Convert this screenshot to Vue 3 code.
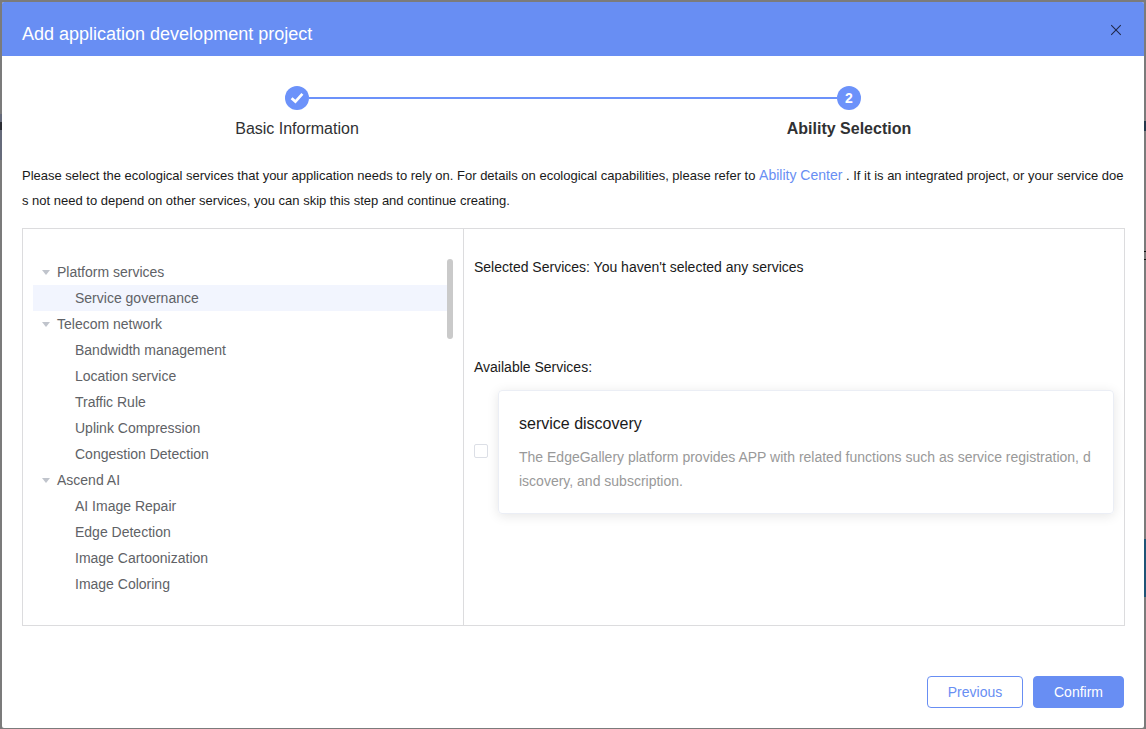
<script setup>
const tree = [
  { label: 'Platform services', children: ['Service governance'] },
  {
    label: 'Telecom network',
    children: ['Bandwidth management', 'Location service', 'Traffic Rule', 'Uplink Compression', 'Congestion Detection']
  },
  { label: 'Ascend AI', children: ['AI Image Repair', 'Edge Detection', 'Image Cartoonization', 'Image Coloring'] }
]
const selected = 'Service governance'
</script>

<template>
  <div class="backdrop">
    <i class="peek peek-left"></i>
    <i class="peek peek-right"></i>
    <i class="peek peek-mark"></i>
    <i class="peek peek-bubble"></i>
    <div class="dialog">
      <header class="head">
        <span class="title">Add application development project</span>
        <svg class="close" width="12" height="12" viewBox="0 0 12 12">
          <path d="M1.2 1.2L10.8 10.8M10.8 1.2L1.2 10.8" fill="none" stroke="#20294a" stroke-width="1.05" />
        </svg>
      </header>

      <div class="steps">
        <div class="step">
          <span class="dot">
            <svg width="14" height="12" viewBox="0 0 14 12">
              <path d="M1.6 6.2L5.4 9.6L12.4 1.8" fill="none" stroke="#fff" stroke-width="2.7" />
            </svg>
          </span>
          <span class="step-name">Basic Information</span>
        </div>
        <div class="rail"></div>
        <div class="step">
          <span class="dot">2</span>
          <span class="step-name active">Ability Selection</span>
        </div>
      </div>

      <p class="intro">Please select the ecological services that your application needs to rely on. For details on ecological capabilities, please refer to <a>Ability Center</a> . If it is an integrated project, or your service doe<br>s not need to depend on other services, you can skip this step and continue creating.</p>

      <div class="panel">
        <div class="left">
          <div class="tree">
            <template v-for="group in tree" :key="group.label">
              <div class="node"><i class="caret"></i>{{ group.label }}</div>
              <div v-for="c in group.children" :key="c" class="node leaf" :class="{ current: c === selected }">{{ c }}</div>
            </template>
          </div>
          <div class="thumb"></div>
        </div>
        <div class="right">
          <div class="caption">Selected Services: You haven't selected any services</div>
          <div class="caption available">Available Services:</div>
          <div class="service">
            <span class="checkbox"></span>
            <div class="card">
              <div class="card-title">service discovery</div>
              <div class="card-text">The EdgeGallery platform provides APP with related functions such as service registration, d<br>iscovery, and subscription.</div>
            </div>
          </div>
        </div>
      </div>

      <footer class="foot">
        <button class="btn">Previous</button>
        <button class="btn primary">Confirm</button>
      </footer>
    </div>
  </div>
</template>

<style>
body {
  margin: 0;
  overflow: hidden;
}
</style>

<style scoped>
* {
  box-sizing: border-box;
}
.backdrop {
  position: relative;
  width: 1146px;
  height: 729px;
  padding: 2px 2px 1px;
  background: #7b7b7b;
  font-family: "Liberation Sans", Arial, sans-serif;
  font-size: 14px;
}
.peek {
  position: absolute;
  width: 2px;
}
.peek-left {
  left: 0;
  top: 114px;
  height: 46px;
  background: linear-gradient(#666b7b 0 8px, #2b2d33 8px 16px, #666b7b 16px);
}
.peek-right {
  right: 0;
  top: 121px;
  height: 10px;
  background: #26384b;
}
.peek-mark {
  right: 0;
  top: 251px;
  height: 9px;
  border: solid #111;
  border-width: 1px 0;
}
.peek-bubble {
  right: 0;
  top: 539px;
  height: 58px;
  background: #1f5476;
}
.dialog {
  width: 1142px;
  height: 726px;
  background: #fff;
  border-radius: 2px;
  overflow: hidden;
  white-space: nowrap;
}
.head {
  display: flex;
  justify-content: space-between;
  height: 54px;
  padding: 19px 22px 0 20px;
  background: #688ef3;
}
.title {
  font-size: 18px;
  line-height: 26px;
  color: #fff;
}
.close {
  margin-top: 3px;
}
.steps {
  display: flex;
  justify-content: center;
  padding-top: 30px;
}
.step {
  display: flex;
  flex-direction: column;
  align-items: center;
  width: 24px;
}
.dot {
  display: flex;
  align-items: center;
  justify-content: center;
  width: 24px;
  height: 24px;
  border-radius: 50%;
  background: #6c92fa;
  color: #fff;
  font-size: 14px;
  font-weight: 700;
}
.step-name {
  margin-top: 7px;
  font-size: 16px;
  line-height: 24px;
  color: #303133;
}
.active {
  font-weight: 700;
}
.rail {
  width: 528px;
  height: 2px;
  margin-top: 11px;
  background: #6c92fa;
}
.intro {
  margin: 22px 0 0 20px;
  font-size: 13px;
  line-height: 25px;
  color: #1a1a1a;
}
.intro a {
  font-size: 14px;
  color: #688ef3;
}
.panel {
  display: flex;
  width: 1103px;
  height: 398px;
  margin: 15px 0 0 20px;
  border: 1px solid #dcdcde;
}
.left {
  display: flex;
  width: 441px;
  padding: 30px 10px 0;
  border-right: 1px solid #dcdcde;
}
.tree {
  width: 414px;
}
.node {
  display: flex;
  align-items: center;
  height: 26px;
  padding-left: 8.5px;
  color: #606266;
}
.leaf {
  padding-left: 42px;
}
.current {
  background: #f2f5fe;
}
.caret {
  margin-right: 7.5px;
  border: 4px solid transparent;
  border-top: 5px solid #c0c4cc;
  border-bottom: 0;
}
.thumb {
  width: 6px;
  height: 80px;
  border-radius: 3px;
  background: #cacaca;
}
.right {
  flex: 1;
  padding: 28px 10px 0;
}
.caption {
  line-height: 20px;
  color: #1a1a1a;
}
.available {
  margin-top: 80px;
}
.service {
  display: flex;
  align-items: center;
  gap: 10px;
  margin-top: 13px;
}
.checkbox {
  width: 14px;
  height: 14px;
  margin-bottom: 2px;
  border: 1px solid #dcdfe6;
  border-radius: 2px;
}
.card {
  width: 616px;
  height: 124px;
  padding: 21px 20px;
  border: 1px solid #ebeef5;
  border-radius: 4px;
  box-shadow: 0 2px 12px rgba(0, 0, 0, 0.1);
}
.card-title {
  font-size: 16px;
  line-height: 24px;
  color: #1a1a1a;
}
.card-text {
  margin-top: 9px;
  line-height: 24px;
  color: #999;
}
.foot {
  display: flex;
  justify-content: flex-end;
  gap: 10px;
  margin-top: 50px;
  padding-right: 20px;
}
.btn {
  width: 96px;
  height: 32px;
  padding: 0;
  border: 1px solid #688ef3;
  border-radius: 4px;
  background: #fff;
  color: #688ef3;
  font: inherit;
}
.primary {
  width: 91px;
  background: #688ef3;
  color: #fff;
}
</style>
